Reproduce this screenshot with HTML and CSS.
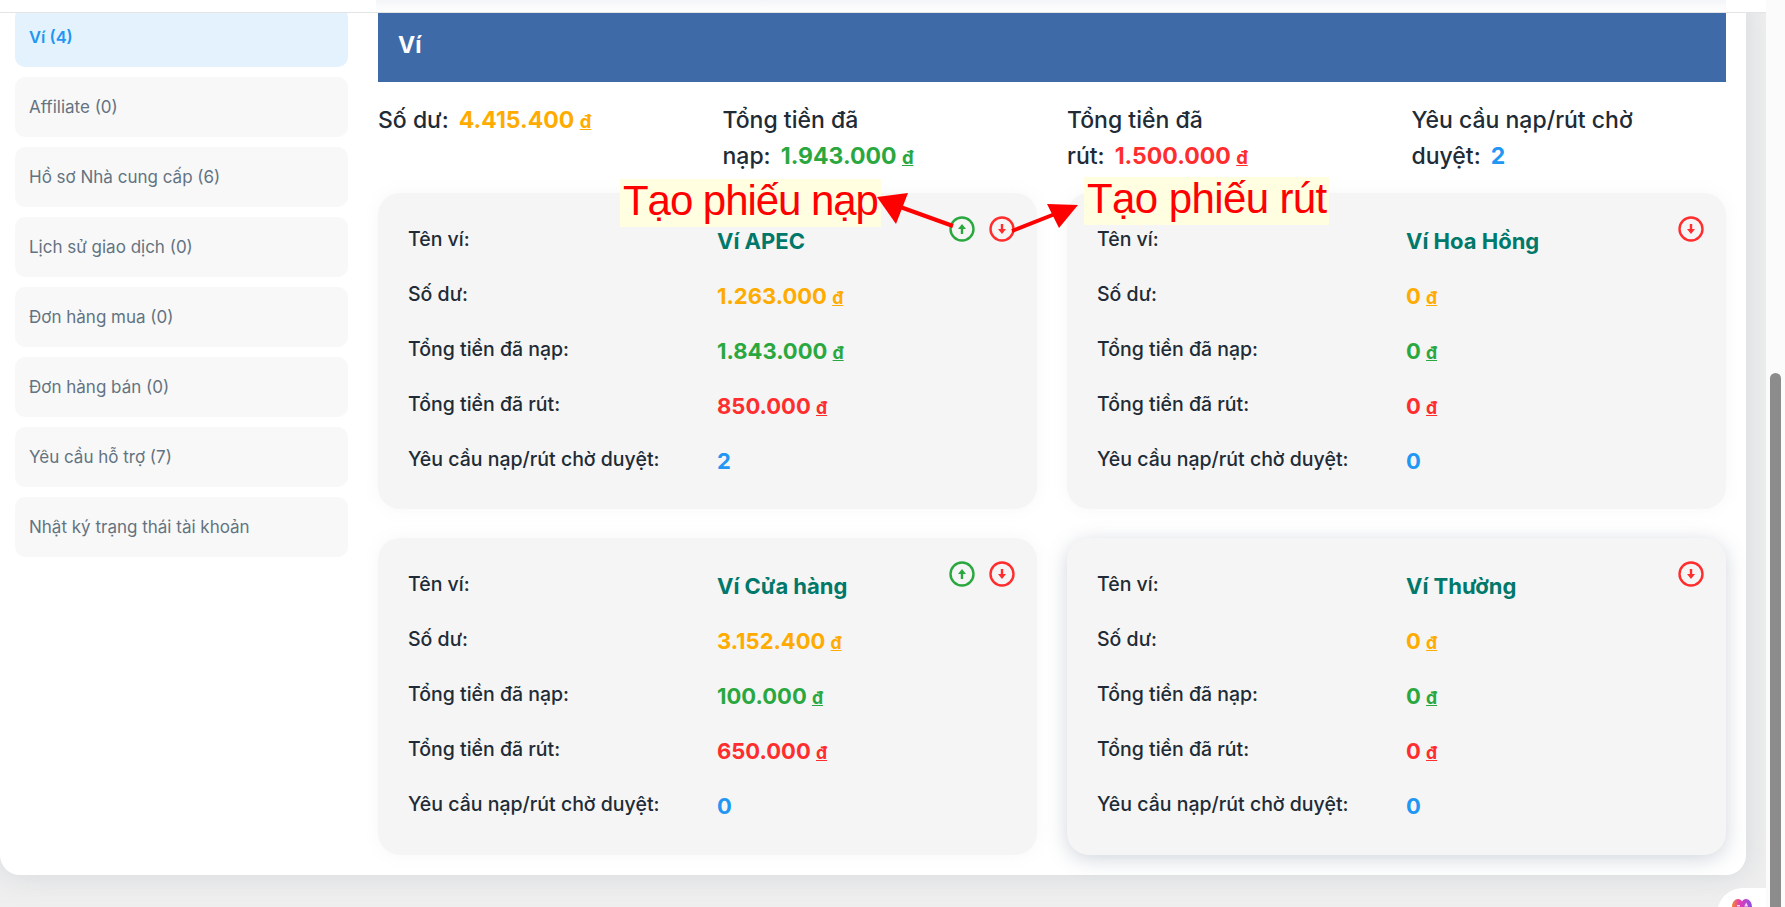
FILE: index.html
```html
<!DOCTYPE html>
<html lang="vi">
<head>
<meta charset="utf-8" />
<title>Ví</title>
<link rel="stylesheet" href="styles.css">
</head>
<body>
<div class="page">
	<div class="topbar"></div>
	<div class="panel">
		<ul class="sidemenu">
			<li class="active">Ví (4)</li>
			<li>Affiliate (0)</li>
			<li>Hồ sơ Nhà cung cấp (6)</li>
			<li>Lịch sử giao dịch (0)</li>
			<li>Đơn hàng mua (0)</li>
			<li>Đơn hàng bán (0)</li>
			<li>Yêu cầu hỗ trợ (7)</li>
			<li>Nhật ký trạng thái tài khoản</li>
		</ul>
		<div class="content">
			<h1>Ví</h1>
			<div class="summary">
				<div>Số dư: <b class="orange">4.415.400 <u>đ</u></b></div>
				<div>Tổng tiền đã<br />nạp: <b class="green">1.943.000 <u>đ</u></b></div>
				<div>Tổng tiền đã<br />rút: <b class="red">1.500.000 <u>đ</u></b></div>
				<div>Yêu cầu nạp/rút chờ<br />duyệt: <b class="blue">2</b></div>
			</div>
			<div class="wallets">
				<div class="wallet">
					<div class="actions">
						<svg class="icon green" viewBox="0 0 26 26"><circle cx="13" cy="13" r="11.5" /><path d="M13 8l4 5h-2.800v5h-2.400v-5H9z" /></svg>
						<svg class="icon red" viewBox="0 0 26 26"><circle cx="13" cy="13" r="11.5" /><path d="M13 18l4-5h-2.800V8h-2.400v5H9z" /></svg>
					</div>
					<span>Tên ví:</span><b class="teal">Ví APEC</b>
					<span>Số dư:</span><b class="orange">1.263.000 <u>đ</u></b>
					<span>Tổng tiền đã nạp:</span><b class="green">1.843.000 <u>đ</u></b>
					<span>Tổng tiền đã rút:</span><b class="red">850.000 <u>đ</u></b>
					<span>Yêu cầu nạp/rút chờ duyệt:</span><b class="blue">2</b>
				</div>
				<div class="wallet">
					<div class="actions">
						<svg class="icon red" viewBox="0 0 26 26"><circle cx="13" cy="13" r="11.5" /><path d="M13 18l4-5h-2.800V8h-2.400v5H9z" /></svg>
					</div>
					<span>Tên ví:</span><b class="teal">Ví Hoa Hồng</b>
					<span>Số dư:</span><b class="orange">0 <u>đ</u></b>
					<span>Tổng tiền đã nạp:</span><b class="green">0 <u>đ</u></b>
					<span>Tổng tiền đã rút:</span><b class="red">0 <u>đ</u></b>
					<span>Yêu cầu nạp/rút chờ duyệt:</span><b class="blue">0</b>
				</div>
				<div class="wallet">
					<div class="actions">
						<svg class="icon green" viewBox="0 0 26 26"><circle cx="13" cy="13" r="11.5" /><path d="M13 8l4 5h-2.800v5h-2.400v-5H9z" /></svg>
						<svg class="icon red" viewBox="0 0 26 26"><circle cx="13" cy="13" r="11.5" /><path d="M13 18l4-5h-2.800V8h-2.400v5H9z" /></svg>
					</div>
					<span>Tên ví:</span><b class="teal">Ví Cửa hàng</b>
					<span>Số dư:</span><b class="orange">3.152.400 <u>đ</u></b>
					<span>Tổng tiền đã nạp:</span><b class="green">100.000 <u>đ</u></b>
					<span>Tổng tiền đã rút:</span><b class="red">650.000 <u>đ</u></b>
					<span>Yêu cầu nạp/rút chờ duyệt:</span><b class="blue">0</b>
				</div>
				<div class="wallet hovered">
					<div class="actions">
						<svg class="icon red" viewBox="0 0 26 26"><circle cx="13" cy="13" r="11.5" /><path d="M13 18l4-5h-2.800V8h-2.400v5H9z" /></svg>
					</div>
					<span>Tên ví:</span><b class="teal">Ví Thường</b>
					<span>Số dư:</span><b class="orange">0 <u>đ</u></b>
					<span>Tổng tiền đã nạp:</span><b class="green">0 <u>đ</u></b>
					<span>Tổng tiền đã rút:</span><b class="red">0 <u>đ</u></b>
					<span>Yêu cầu nạp/rút chờ duyệt:</span><b class="blue">0</b>
				</div>
			</div>
		</div>
	</div>
	<div class="note note-in">Tạo phiếu nạp</div>
	<div class="note note-out">Tạo phiếu rút</div>
	<svg class="arrows" viewBox="0 0 1785 907">
		<path class="shaft" d="M953 226L892 204" />
		<path class="head" d="M877 197L908 193 896 224z" />
		<path class="shaft" d="M1012 231L1060 212" />
		<path class="head" d="M1078 205L1047 204 1059 228z" />
	</svg>
	<div class="helper">
		<svg width="20" height="20" viewBox="0 0 20 20">
			<defs>
				<linearGradient id="lobe" x1="0" x2="1" y1="0" y2="0">
					<stop offset="0" stop-color="#f5862e" />
					<stop offset="0.4" stop-color="#e23bb4" />
					<stop offset="1" stop-color="#8b4fe8" />
				</linearGradient>
			</defs>
			<path fill="url(#lobe)" d="M0 8C0 3 3 0 6 0c2 0 3.300 1 4 2.500C10.700 1 12 0 14 0c3 0 6 3 6 8v12H0z" />
			<path class="lobe-mark" d="M5 6h3v1.500H5zM14.200 3.500l2 4h-4z" />
		</svg>
	</div>
</div>
<div class="scrollbar"><div class="thumb"></div></div>
</body>
</html>
```

FILE: styles.css
```css
html, body {
	margin: 0;
	height: 100%;
	overflow: hidden;
}
body {
	display: flex;
	font-family: "Inter", "Noto Sans", sans-serif;
	color: #212b36;
	background-color: #fbfbfb;
}
.page {
	position: relative;
	flex: 1;
	height: 907px;
	background-color: #efefef;
	overflow: hidden;
}
.topbar {
	position: absolute;
	top: 0;
	left: 0;
	right: 0;
	height: 12px;
	z-index: 2;
	background: #fff linear-gradient(#f4f5f8, #ffffff) no-repeat 376px 0 / 1350px 100%;
	border-bottom: 1px solid #e3e4e6;
}
.panel {
	display: grid;
	grid-template-columns: 333px 1348px;
	gap: 30px;
	height: 875px;
	box-sizing: border-box;
	margin-right: 20px;
	padding: 0 20px 0 15px;
	background-color: #fff;
	border-radius: 0 0 20px 20px;
	box-shadow: 0 0 30px rgba(145, 158, 171, 0.3);
}
.sidemenu {
	display: flex;
	flex-direction: column;
	gap: 10px;
	margin: 7px 0 0;
	padding: 0;
	list-style: none;
}
.sidemenu li {
	height: 60px;
	line-height: 60px;
	padding-left: 14px;
	font-size: 17px;
	color: #637381;
	background-color: #f8f8f8;
	border-radius: 10px;
}
.sidemenu li.active {
	font-size: 16.500px;
	font-weight: 600;
	color: #2196f3;
	background-color: #e4f2fe;
}
h1 {
	margin: 4px 0 20px;
	height: 78px;
	line-height: 82px;
	padding-left: 20px;
	font-size: 23px;
	font-weight: 700;
	color: #fff;
	background-color: #3f6aa8;
}
.summary {
	display: grid;
	grid-template-columns: repeat(4, 1fr);
	column-gap: 30px;
	height: 72px;
	margin-bottom: 19px;
	font-size: 23px;
	line-height: 36px;
	font-weight: 500;
}
.summary b {
	margin-left: 4px;
	font-size: 23px;
}
u {
	font-size: 0.8em;
}
.orange { color: #ffab00; }
.green { color: #2aa83f; }
.red { color: #ff2d2d; }
.blue { color: #2196f3; }
.teal { color: #00786a; }
.wallets {
	display: grid;
	grid-template-columns: 1fr 1fr;
	grid-template-rows: 316px 317px;
	column-gap: 30px;
	row-gap: 29px;
}
.wallet {
	position: relative;
	display: grid;
	grid-template-columns: 309px 1fr;
	grid-auto-rows: 55px;
	box-sizing: border-box;
	padding: 21px 30px 0;
	background-color: #f5f5f5;
	border-radius: 22px;
	box-shadow: 0 0 16px rgba(145, 158, 171, 0.08);
}
.wallet.hovered {
	box-shadow: 0 4px 20px rgba(100, 116, 139, 0.3);
}
.wallet span {
	font-size: 19.500px;
	font-weight: 500;
	line-height: 50px;
}
.wallet b {
	font-size: 22px;
	line-height: 55px;
}
.actions {
	position: absolute;
	top: 23px;
	right: 22px;
	display: flex;
	gap: 14px;
}
.icon {
	width: 26px;
	height: 26px;
	fill: currentColor;
}
.icon circle {
	fill: none;
	stroke: currentColor;
	stroke-width: 2.400;
}
.note {
	position: absolute;
	z-index: 3;
	box-sizing: border-box;
	height: 48px;
	line-height: 44px;
	padding-left: 3px;
	font-family: "Liberation Sans", Arial, sans-serif;
	font-size: 42px;
	color: #ff0000;
	background-color: #fffee0;
}
.note-in {
	left: 620px;
	top: 179px;
	width: 261px;
	letter-spacing: -1.050px;
}
.note-out {
	left: 1084px;
	top: 177px;
	width: 245px;
	letter-spacing: -0.600px;
}
.arrows {
	position: absolute;
	top: 0;
	left: 0;
	width: 1785px;
	height: 907px;
	z-index: 4;
}
.shaft {
	stroke: #ff0000;
	stroke-width: 4;
}
.head {
	fill: #ff0000;
}
.helper {
	position: absolute;
	top: 888px;
	right: 0;
	width: 34px;
	height: 19px;
	padding: 11px 0 0 15px;
	background-color: #fff;
	border-radius: 26px 0 0 0;
}
.lobe-mark {
	fill: #fff;
	opacity: 0.8;
}
.scrollbar {
	position: relative;
	width: 19px;
	height: 907px;
	background-color: #fbfbfb;
}
.thumb {
	position: absolute;
	top: 373px;
	bottom: 0;
	left: 4px;
	right: 4px;
	background-color: #8c8c8c;
	border-radius: 6px 6px 0 0;
}
```
